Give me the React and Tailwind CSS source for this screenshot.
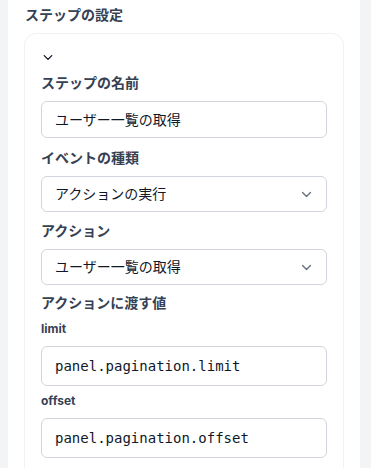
import React from 'react';

const Chevron = ({ className }) => (
  <svg viewBox="0 0 12 8" width="12" height="8" className={className} fill="none">
    <path d="M1.5 1.75 6 6.25l4.5-4.5" stroke="currentColor" strokeWidth="1.6" strokeLinecap="round" strokeLinejoin="round" />
  </svg>
);

const Label = ({ children, className = '' }) => (
  <div className={`h-5 flex items-center text-sm font-bold text-gray-700 ${className}`}>{children}</div>
);

const SubLabel = ({ children, className = '' }) => (
  <div className={`h-4 flex items-center text-xs font-bold text-gray-700 ${className}`}>{children}</div>
);

const TextBox = ({ value }) => (
  <div className="h-[37px] rounded-md border border-gray-300 bg-white px-[13px] flex items-center text-sm text-gray-900">
    {value}
  </div>
);

const SelectBox = ({ value }) => (
  <div className="h-[36px] rounded-md border border-gray-300 bg-white pl-[13px] pr-[14px] flex items-center justify-between text-sm text-gray-900">
    <span>{value}</span>
    <Chevron className="text-gray-500 w-[11px] h-[7px]" />
  </div>
);

const CodeBox = ({ value }) => (
  <div
    className="h-[40px] rounded-md border border-gray-300 bg-white px-[13px] flex items-center text-sm text-gray-900"
    style={{ fontFamily: '"DejaVu Sans Mono", "Liberation Mono", monospace' }}
  >
    {value}
  </div>
);

const App = () => {
  return (
    <div
      className="min-h-screen bg-[#f3f4f6] flex"
      style={{ fontFamily: 'Inter, "Noto Sans CJK JP", sans-serif' }}
    >
      <div className="ml-2 w-[352px] h-[468px] overflow-hidden bg-white px-4 pt-[5px]">
        <h2 className="h-5 flex items-center text-sm font-bold text-gray-700 pl-px">ステップの設定</h2>

        {/* ステップカード */}
        <div className="mt-2 rounded-xl border border-[#f1f2f4] bg-white px-4 pt-[15px] pb-6">
          <div className="h-4 flex items-center pl-[2px]">
            <Chevron className="text-gray-900 w-[10px] h-[7px]" />
          </div>

          <Label className="mt-2 mb-2">ステップの名前</Label>
          <TextBox value="ユーザー一覧の取得" />

          <Label className="mt-[10px] mb-2">イベントの種類</Label>
          <SelectBox value="アクションの実行" />

          <Label className="mt-[9px] mb-2">アクション</Label>
          <SelectBox value="ユーザー一覧の取得" />

          <Label className="mt-2">アクションに渡す値</Label>
          <SubLabel className="mt-2 mb-[9px]">limit</SubLabel>
          <CodeBox value="panel.pagination.limit" />
          <SubLabel className="mt-[7px] mb-[9px]">offset</SubLabel>
          <CodeBox value="panel.pagination.offset" />
        </div>
      </div>
    </div>
  );
};

export default App;
